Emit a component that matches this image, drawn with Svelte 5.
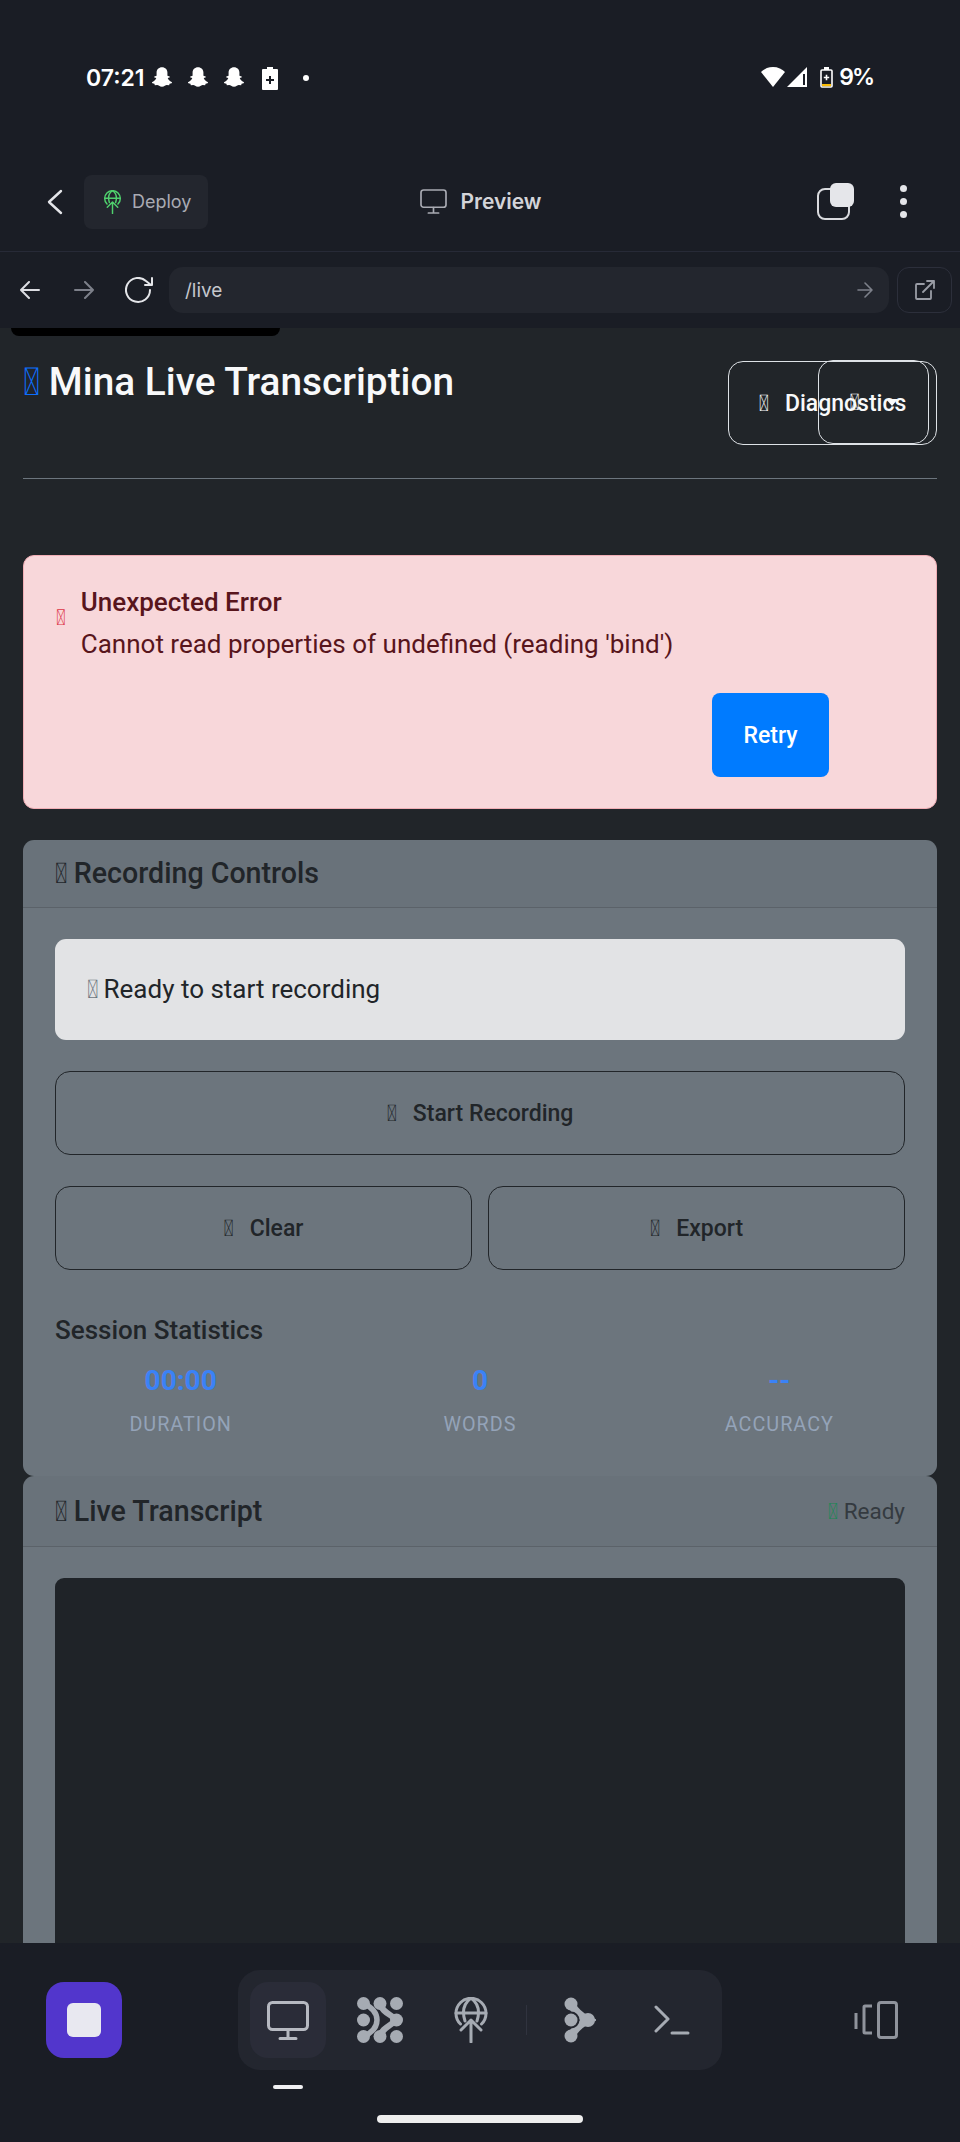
<script>
  const ghosts = [0, 1, 2]
  const stats = [
    { value: '00:00', label: 'DURATION' },
    { value: '0', label: 'WORDS' },
    { value: '--', label: 'ACCURACY' },
  ]
  // icon font never loaded in the page, so these land as missing glyph boxes
  const missing = '\uF52A'
  const ghost = 'M12 2c-3 0-5 2.2-5 5v3l-2 .5c-.4.2-.3.8.1 1l1.6.6c-.5 1.6-1.8 3-3.6 3.7-.5.2-.4.9.1 1.1l1.8.5.4 1.2 2.2-.1c1 .1 2.3 1.5 4.4 1.5s3.4-1.4 4.4-1.5l2.2.1.4-1.2 1.8-.5c.5-.2.6-.9.1-1.1-1.8-.7-3.1-2.1-3.6-3.7l1.6-.6c.4-.2.5-.8.1-1L17 10V7c0-2.8-2-5-5-5z'
</script>

{#snippet globeUp(w, h, stroke)}
  <svg width={w} height={h} viewBox="0 0 36 46" fill="none" stroke="currentColor" stroke-width={stroke} stroke-linecap="round" stroke-linejoin="round">
    <path d="M7.500 27A15 15 0 1 1 28.500 27" />
    <path d="M3 16h30M18 1c-8 6-9 14-6 23M18 1c8 6 9 14 6 23" />
    <path d="M18 45V23M8 33l10-10 10 10" />
  </svg>
{/snippet}

{#snippet monitor(w, h, stroke)}
  <svg width={w} height={h} viewBox="0 0 42 39" fill="none" stroke="currentColor" stroke-width={stroke} stroke-linecap="round">
    <rect x="1.5" y="1.5" width="39" height="27" rx="4" />
    <path d="M21 29v8M13 37.5h16" />
  </svg>
{/snippet}

<div class="screen">
  <div class="statusbar">
    <div class="status-left">
      <span class="time">07:21</span>
      {#each ghosts as g (g)}
        <svg class="ghost" viewBox="0 0 24 24" width="26" height="26" fill="#fff"><path d={ghost} /></svg>
      {/each}
      <svg class="batt" width="16" height="23" viewBox="0 0 16 23"><path fill="#fff" d="M5 0h6v2h4a1 1 0 0 1 1 1v19a1 1 0 0 1-1 1H1a1 1 0 0 1-1-1V3a1 1 0 0 1 1-1h4z" /><path stroke="#1a1d25" stroke-width="2" d="M4 13h8M8 9v8" /></svg>
      <span class="dot"></span>
    </div>
    <div class="status-right">
      <svg width="24" height="20" viewBox="0 0 24 20" fill="#fff"><path d="M12 20 0 5c3-3 7-5 12-5s9 2 12 5z" /></svg>
      <svg width="20" height="20" viewBox="0 0 20 20"><path fill="#fff" d="M0 20 20 0v20z" /><path fill="#1a1d25" d="M16 7h2v11h-2z" /></svg>
      <svg class="batt2" width="13" height="21" viewBox="0 0 13 21"><path fill="none" stroke="#fff" stroke-width="1.6" d="M2 3h9a1 1 0 0 1 1 1v15a1 1 0 0 1-1 1H2a1 1 0 0 1-1-1V4a1 1 0 0 1 1-1z" /><path fill="#fff" d="M4 0h5v3H4z" /><path fill="#fbbc04" d="M2 17h9v2.200H2z" /><path stroke="#fff" stroke-width="1.6" d="M3.800 10.500h5.400M6.500 7.800v5.400" /></svg>
      <span class="pct">9%</span>
    </div>
  </div>

  <div class="appbar">
    <div class="appbar-left">
      <svg width="18" height="26" viewBox="0 0 18 26" fill="none" stroke="#e4e5e9" stroke-width="2.4" stroke-linecap="round" stroke-linejoin="round"><path d="M15 2 3 13l12 11" /></svg>
      <button class="deploy">
        <span class="deploy-icon">{@render globeUp(19, 24, 2.8)}</span>
        Deploy
      </button>
    </div>
    <div class="appbar-title">
      <span class="title-icon">{@render monitor(29, 25, 2.6)}</span>
      Preview
    </div>
    <div class="appbar-right">
      <span class="stack"><span class="stack-back"></span><span class="stack-front"></span></span>
      <span class="kebab"><i></i><i></i><i></i></span>
    </div>
  </div>

  <div class="toolbar">
    <svg width="20" height="18" viewBox="0 0 20 18" fill="none" stroke="#dcdde2" stroke-width="2" stroke-linecap="round" stroke-linejoin="round"><path d="M19 9H1M9 1 1 9l8 8" /></svg>
    <svg class="fwd" width="20" height="18" viewBox="0 0 20 18" fill="none" stroke="#7d808a" stroke-width="2" stroke-linecap="round" stroke-linejoin="round"><path d="M1 9h18M11 1l8 8-8 8" /></svg>
    <svg class="reload" width="28" height="26" viewBox="0 0 28 26" fill="none" stroke="#e4e5e9" stroke-width="2" stroke-linecap="round" stroke-linejoin="round"><path d="M25 13a12 12 0 1 1-4-9l5 4" /><path d="M27 1v7h-7" /></svg>
    <div class="url">
      <span>/live</span>
      <svg width="16" height="16" viewBox="0 0 16 16" fill="none" stroke="#7d808a" stroke-width="1.6" stroke-linecap="round" stroke-linejoin="round"><path d="M1 8h14M8 1l7 7-7 7" /></svg>
    </div>
    <button class="ext">
      <svg width="20" height="20" viewBox="0 0 20 20" fill="none" stroke="#9a9da6" stroke-width="1.8" stroke-linecap="round" stroke-linejoin="round"><path d="M9 4H2a1 1 0 0 0-1 1v13a1 1 0 0 0 1 1h13a1 1 0 0 0 1-1v-7M8 12 19 1M12 1h7v7" /></svg>
    </button>
  </div>

  <div class="page">
    <div class="notch"></div>
    <div class="page-head">
      <h1><span class="tofu blue">{missing}</span> Mina Live Transcription</h1>
      <div class="head-actions">
        <button class="outline"><span class="tofu">{missing}</span>Diagnostics</button>
        <button class="outline overlay"><span class="tofu">{missing}</span><span class="caret"></span></button>
      </div>
    </div>

    <div class="alert">
      <span class="tofu red">{missing}</span>
      <div class="alert-body">
        <strong>Unexpected Error</strong>
        <p>Cannot read properties of undefined (reading 'bind')</p>
        <button class="retry">Retry</button>
      </div>
    </div>

    <section class="card">
      <header class="card-head">
        <h5><span class="tofu">{missing}</span> Recording Controls</h5>
      </header>
      <div class="card-body">
        <div class="status-box"><span class="tofu faint">{missing}</span> Ready to start recording</div>
        <button class="act"><span class="tofu">{missing}</span>Start Recording</button>
        <div class="act-row">
          <button class="act"><span class="tofu">{missing}</span>Clear</button>
          <button class="act"><span class="tofu">{missing}</span>Export</button>
        </div>
        <h6>Session Statistics</h6>
        <div class="stats">
          {#each stats as s (s.label)}
            <div class="stat">
              <span class="stat-value">{s.value}</span>
              <span class="stat-label">{s.label}</span>
            </div>
          {/each}
        </div>
      </div>
    </section>

    <section class="card">
      <header class="card-head split">
        <h5><span class="tofu">{missing}</span> Live Transcript</h5>
        <span class="ready"><span class="tofu green">{missing}</span> Ready</span>
      </header>
      <div class="card-body">
        <div class="transcript"></div>
      </div>
    </section>
  </div>

  <div class="dock">
    <div class="dock-row">
      <button class="stop"><span></span></button>
      <div class="pill">
        <span class="tile active">{@render monitor(42, 39, 3)}</span>
        <span class="tile">
          <svg width="46" height="46" viewBox="0 0 46 46" fill="currentColor">
            <circle cx="6.500" cy="6.500" r="6.500" /><circle cx="23" cy="6.500" r="6.500" /><circle cx="39.500" cy="6.500" r="6.500" />
            <circle cx="6.500" cy="23" r="6.500" /><circle cx="39.500" cy="23" r="6.500" />
            <circle cx="6.500" cy="39.500" r="6.500" /><circle cx="23" cy="39.500" r="6.500" /><circle cx="39.500" cy="39.500" r="6.500" />
            <path fill="none" stroke="currentColor" stroke-width="6" d="M23 6.500C25 15 33 17 39.500 23 33 29 25 31 23 39.500" />
            <path fill="none" stroke="currentColor" stroke-width="5.500" d="M6.500 6.500C12 9 20 14 20 23S12 37 6.500 39.500" />
          </svg>
        </span>
        <span class="tile globe">{@render globeUp(36, 46, 3)}</span>
        <span class="divider"></span>
        <span class="tile">
          <svg width="32" height="46" viewBox="0 0 32 46" fill="currentColor">
            <circle cx="7" cy="7" r="6.500" /><circle cx="7" cy="39" r="6.500" /><circle cx="24" cy="23" r="7" />
            <path fill="none" stroke="currentColor" stroke-width="8" d="M7 7Q13 18 24 23 13 28 7 39" />
            <circle cx="7" cy="23" r="8.500" fill="#23262f" /><circle cx="7" cy="23" r="6.500" />
          </svg>
        </span>
        <span class="tile">
          <svg width="36" height="30" viewBox="0 0 36 30" fill="none" stroke="currentColor" stroke-width="3" stroke-linecap="round" stroke-linejoin="round"><path d="M2 2l12 12L2 26M18 28h16" /></svg>
        </span>
      </div>
      <span class="tile plain">
        <svg width="44" height="38" viewBox="0 0 44 38" fill="none" stroke="#8f939c" stroke-width="3" stroke-linejoin="round"><path d="M2 12v16M18 5h-7a1 1 0 0 0-1 1v25a1 1 0 0 0 1 1h7" /><rect x="24.500" y="1.500" width="18" height="35" rx="2.500" /></svg>
      </span>
    </div>
    <div class="indicator"></div>
    <div class="homebar"></div>
  </div>
</div>

<style>
  :global(body) {
    margin: 0;
    background: #1a1d25;
  }

  .screen {
    width: 960px;
    height: 2142px;
    display: flex;
    flex-direction: column;
    overflow: hidden;
    background: #1a1d25;
    font-family: Inter, "Noto Sans", sans-serif;
  }

  button {
    font-family: inherit;
    cursor: pointer;
  }

  /* ── Status bar ─── */
  .statusbar {
    height: 155px;
    padding: 66px 87px 0 87px;
    box-sizing: border-box;
    display: flex;
    justify-content: space-between;
    align-items: flex-start;
    color: #fff;
    flex-shrink: 0;
  }

  .status-left {
    display: flex;
    align-items: center;
    height: 24px;
  }

  .time {
    font-size: 23px;
    font-weight: 600;
    width: 63px;
    margin-left: -1px;
  }

  .ghost {
    margin-right: 10px;
  }

  .batt {
    margin-left: 5px;
  }

  .dot {
    width: 6px;
    height: 6px;
    border-radius: 50%;
    background: #fff;
    margin-left: 25px;
  }

  .status-right {
    display: flex;
    align-items: center;
    gap: 2px;
    height: 22px;
  }

  .batt2 {
    margin-left: 11px;
    margin-right: 4px;
  }

  .pct {
    font-size: 23px;
    font-weight: 600;
    letter-spacing: -2px;
  }

  /* ── App bar ─── */
  .appbar {
    height: 97px;
    padding: 0 46px 3px;
    box-sizing: border-box;
    border-bottom: 1px solid #272a37;
    display: grid;
    grid-template-columns: 1fr auto 1fr;
    align-items: center;
    flex-shrink: 0;
  }

  .appbar-left {
    display: flex;
    align-items: center;
    gap: 20px;
  }

  .deploy {
    width: 124px;
    height: 54px;
    border: 0;
    border-radius: 8px;
    background: #23262e;
    color: #a9abb3;
    font-size: 18px;
    display: flex;
    align-items: center;
    gap: 10px;
    padding: 0 0 0 19px;
  }

  .deploy-icon {
    color: #4fd06d;
    display: flex;
  }

  .appbar-title {
    display: flex;
    align-items: center;
    gap: 13px;
    color: #d3d4d9;
    font-size: 21px;
    font-weight: 600;
  }

  .title-icon {
    color: #a9abb3;
    display: flex;
  }

  .appbar-right {
    justify-self: end;
    display: flex;
    align-items: center;
    gap: 46px;
    margin-right: 7px;
  }

  .stack {
    width: 37px;
    height: 37px;
    display: block;
    position: relative;
  }

  .stack-back {
    position: absolute;
    left: 0;
    bottom: 0;
    width: 33px;
    height: 32px;
    box-sizing: border-box;
    border: 2.500px solid #d9dade;
    border-radius: 8px;
  }

  .stack-front {
    position: absolute;
    right: 0;
    top: 0;
    width: 24px;
    height: 24px;
    background: #e5e6ea;
    border-radius: 6px;
  }

  .kebab {
    display: flex;
    flex-direction: column;
    gap: 6px;
  }

  .kebab i {
    width: 7px;
    height: 7px;
    border-radius: 50%;
    background: #e4e5e9;
  }

  /* ── Browser toolbar ─── */
  .toolbar {
    height: 76px;
    padding: 0 8px 0 20px;
    box-sizing: border-box;
    display: flex;
    align-items: center;
    flex-shrink: 0;
  }

  .fwd {
    margin-left: 34px;
  }

  .reload {
    margin-left: 31px;
  }

  .url {
    margin-left: 16px;
    margin-right: 8px;
    flex: 1;
    height: 46px;
    padding: 0 16px;
    box-sizing: border-box;
    background: #23262e;
    border-radius: 14px;
    display: flex;
    align-items: center;
    justify-content: space-between;
    color: #c5c7cd;
    font-size: 19px;
  }

  .ext {
    width: 55px;
    height: 46px;
    padding: 0;
    display: flex;
    align-items: center;
    justify-content: center;
    background: transparent;
    border: 1px solid #2c2f3b;
    border-radius: 12px;
  }

  /* ── Web page ─── */
  .page {
    flex: 1;
    min-height: 0;
    overflow: hidden;
    position: relative;
    padding: 0 23px;
    background: #212529;
    font-family: Roboto, sans-serif;
    color: #212529;
  }

  .notch {
    position: absolute;
    left: 11px;
    top: 0;
    width: 269px;
    height: 8px;
    background: #000;
    border-radius: 0 0 8px 8px;
  }

  .tofu {
    font-family: Roboto, sans-serif;
    font-weight: 400;
  }

  .tofu.blue { color: #0d6efd; }
  .tofu.red { color: #dc3545; }
  .tofu.green { color: #198754; }
  .tofu.faint { color: #6c757d; }

  h1 .tofu,
  h5 .tofu {
    margin-right: -1px;
  }

  .page-head {
    height: 151px;
    box-sizing: border-box;
    border-bottom: 1px solid #6c757d;
    margin-bottom: 76px;
    display: flex;
    justify-content: space-between;
    align-items: flex-start;
    position: relative;
  }

  h1 {
    margin: 31px 0 0;
    font-size: 38.800px;
    font-weight: 500;
    line-height: 1.2;
    color: #f8f9fa;
  }

  .head-actions {
    margin-top: 33px;
  }

  .outline {
    width: 209px;
    height: 84px;
    box-sizing: border-box;
    background: transparent;
    border: 1px solid #dee2e6;
    border-radius: 15px;
    color: #f8f9fa;
    font-family: Roboto, sans-serif;
    font-size: 23px;
    font-weight: 500;
    display: flex;
    align-items: center;
    justify-content: center;
    gap: 16px;
  }

  .outline.overlay {
    position: absolute;
    top: 32px;
    right: 8px;
    width: 111px;
    height: 84px;
    border-width: 1.500px;
    gap: 26px;
  }

  .caret {
    width: 0;
    height: 0;
    border-left: 6px solid transparent;
    border-right: 6px solid transparent;
    border-top: 7px solid #f8f9fa;
  }

  .alert {
    height: 254px;
    box-sizing: border-box;
    margin-bottom: 31px;
    padding: 28px 32px;
    background: #f8d7da;
    border: 1px solid #f1aeb5;
    border-radius: 11px;
    color: #58151c;
    font-size: 26px;
    display: flex;
    gap: 15px;
  }

  .alert .tofu {
    margin-top: 21px;
    font-size: 22px;
  }

  .alert-body {
    flex: 1;
    display: flex;
    flex-direction: column;
  }

  .alert strong {
    font-weight: 500;
    line-height: 36px;
  }

  .alert p {
    margin: 6px 0 0;
    line-height: 36px;
  }

  .retry {
    align-self: flex-end;
    margin: 31px 75px 0 0;
    width: 117px;
    height: 84px;
    background: #007bff;
    border: 0;
    border-radius: 8px;
    color: #fff;
    font-family: Roboto, sans-serif;
    font-size: 23px;
    font-weight: 500;
  }

  .card {
    background: #6c757d;
    border-radius: 11px;
    overflow: hidden;
  }

  .alert + .card {
    height: 636px;
  }

  .card-head {
    height: 68px;
    box-sizing: border-box;
    padding: 0 32px;
    background: rgba(33, 37, 41, 0.03);
    border-bottom: 1px solid rgba(33, 37, 41, 0.2);
    display: flex;
    align-items: center;
  }

  .card-head.split {
    justify-content: space-between;
    height: 71px;
  }

  h5 {
    margin: 0;
    font-size: 28.600px;
    font-weight: 500;
    line-height: 1.2;
  }

  .ready {
    font-size: 22.500px;
    color: #343a40;
  }

  .card-body {
    padding: 31px 32px;
  }

  .status-box {
    height: 101px;
    box-sizing: border-box;
    padding: 0 32px 2px;
    margin-bottom: 31px;
    background: #e2e3e5;
    border-radius: 11px;
    font-size: 26px;
    display: flex;
    align-items: center;
    gap: 5px;
  }

  .act {
    width: 100%;
    height: 84px;
    background: transparent;
    border: 1px solid #212529;
    border-radius: 15px;
    color: #212529;
    font-family: Roboto, sans-serif;
    font-size: 23px;
    font-weight: 500;
    display: flex;
    align-items: center;
    justify-content: center;
    gap: 16px;
  }

  .act-row {
    display: grid;
    grid-template-columns: 1fr 1fr;
    gap: 16px;
    margin-top: 31px;
  }

  h6 {
    margin: 45px 0 16px;
    font-size: 26px;
    font-weight: 500;
    line-height: 1.2;
  }

  .stats {
    display: grid;
    grid-template-columns: repeat(3, 1fr);
    margin: 0 -24px;
  }

  .stat {
    display: flex;
    flex-direction: column;
    align-items: center;
  }

  .stat-value {
    font-size: 28px;
    font-weight: 700;
    color: #3b82f6;
    line-height: 38px;
  }

  .stat-label {
    margin-top: 13px;
    font-size: 19.800px;
    letter-spacing: 1px;
    color: #94a3b8;
  }

  .transcript {
    height: 500px;
    background: #1f2328;
    border-radius: 9px;
  }

  /* ── Dock ─── */
  .dock {
    height: 199px;
    flex-shrink: 0;
    box-sizing: border-box;
    padding: 27px 46px 0;
    color: #a6abb3;
  }

  .dock-row {
    display: flex;
    justify-content: space-between;
    align-items: center;
  }

  .stop {
    width: 76px;
    height: 76px;
    padding: 0;
    border: 0;
    border-radius: 18px;
    background: #5236cc;
    display: flex;
    align-items: center;
    justify-content: center;
  }

  .stop span {
    width: 34px;
    height: 34px;
    border-radius: 6px;
    background: #e8e8f0;
  }

  .pill {
    width: 484px;
    height: 100px;
    box-sizing: border-box;
    padding: 0 12px;
    background: #23262f;
    border-radius: 22px;
    display: flex;
    align-items: center;
    gap: 16px;
  }

  .tile {
    width: 76px;
    height: 76px;
    border-radius: 18px;
    display: flex;
    align-items: center;
    justify-content: center;
  }

  .tile.active {
    background: #2a2c38;
    color: #b6b9c1;
  }

  .tile.globe svg {
    margin-left: -2px;
  }

  .divider {
    width: 1px;
    height: 30px;
    background: #30333f;
    margin: 0 -0.500px;
  }

  .indicator {
    width: 30px;
    height: 4px;
    border-radius: 2px;
    background: #f0f0f3;
    margin: 15px 0 0 227px;
  }

  .homebar {
    width: 206px;
    height: 8px;
    border-radius: 4px;
    background: #eeeeee;
    margin: 26px 0 0 331px;
  }
</style>
